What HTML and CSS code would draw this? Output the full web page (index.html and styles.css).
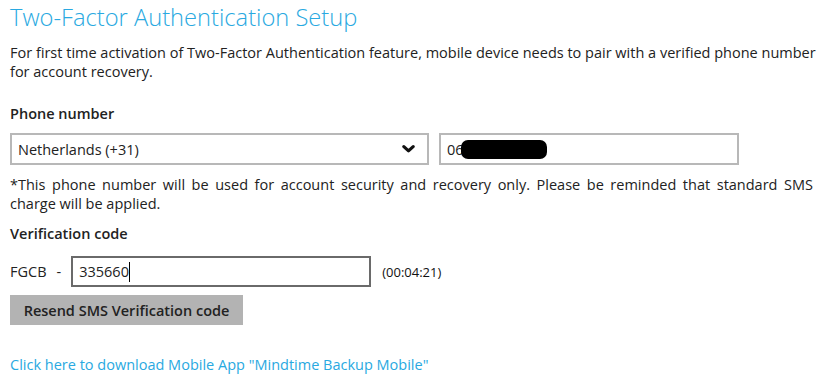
FILE: index.html
```html
<!DOCTYPE html>
<html lang="en">
<head>
  <meta charset="UTF-8">
  <title>Two-Factor Authentication Setup</title>
  <link rel="stylesheet" href="styles.css">
</head>
<body>
  <div class="setup">
    <h1 class="setup-title">Two-Factor Authentication Setup</h1>
    <p class="intro">For first time activation of Two-Factor Authentication feature, mobile device needs to pair with a verified phone number for account recovery.</p>

    <!-- Phone number -->
    <div class="field-label">Phone number</div>
    <div class="phone-row">
      <div class="select-box">
        <span>Netherlands (+31)</span>
        <svg class="chevron" viewBox="0 0 14 10" width="13" height="10">
          <path d="M2 2.5 L7 7 L12 2.5" fill="none" stroke="#111" stroke-width="3.4" stroke-linecap="round" stroke-linejoin="round"/>
        </svg>
      </div>
      <div class="text-box phone-box">
        <span>06</span><span class="redacted"></span>
      </div>
    </div>
    <p class="note">*This phone number will be used for account security and recovery only. Please be reminded that standard SMS charge will be applied.</p>

    <!-- Verification code -->
    <div class="field-label code-label">Verification code</div>
    <div class="code-row">
      <span class="prefix">FGCB</span>
      <span class="dash">-</span>
      <div class="text-box code-box"><span>335660</span><span class="caret"></span></div>
      <span class="timer">(00:04:21)</span>
    </div>
    <button class="resend-btn">Resend SMS Verification code</button>

    <a class="app-link" href="#">Click here to download Mobile App "Mindtime Backup Mobile"</a>
  </div>
</body>
</html>
```

FILE: styles.css
```css
html, body { margin: 0; padding: 0; background: #fff; }
body { font-family: 'Open Sans', Arial, sans-serif; font-size: 14.5px; color: #222; }

.setup { padding: 0 10px; }

.setup-title {
  margin: 0; padding-top: 1px;
  font-size: 23.7px; font-weight: 300; line-height: 32px;
  color: #29a9e1;
}
.intro { margin: 10px -8px 0 0; line-height: 19px; }

.field-label { font-weight: 600; margin-top: 23px; line-height: 20px; }
.code-label { margin-top: 11px; }

/* Phone row */
.phone-row { display: flex; gap: 10px; margin-top: 9px; }
.select-box, .text-box {
  box-sizing: border-box; height: 32px;
  border: 2px solid #b8b8b8; background: #fff;
  display: flex; align-items: center; padding: 0 6px;
}
.select-box { width: 419px; justify-content: space-between; }
.chevron { margin-right: 6px; }
.phone-box { width: 300px; }
.redacted {
  display: inline-block; width: 86px; height: 19px;
  background: #000; border-radius: 7px; margin-left: -3px;
}

.note {
  margin: 10px 0 0 0; line-height: 19px;
  text-align: justify;
}

/* Verification row */
.code-row { display: flex; align-items: center; margin-top: 12px; }
.dash { margin: 0 10px; }
.code-box { width: 300px; height: 31px; border-color: #6a6a6a; }
.caret { display: inline-block; width: 1px; height: 20px; background: #000; }
.timer { font-size: 13px; margin-left: 11px; color: #111; }

.resend-btn {
  display: block; margin-top: 8px;
  width: 233px; height: 30px;
  border: none; background: #b3b3b3;
  font-family: 'Open Sans', Arial, sans-serif; font-size: 14.5px; font-weight: 600;
  color: #222; padding: 0;
}

.app-link {
  display: inline-block; margin-top: 30px;
  color: #29a9e1; text-decoration: none;
}
```
